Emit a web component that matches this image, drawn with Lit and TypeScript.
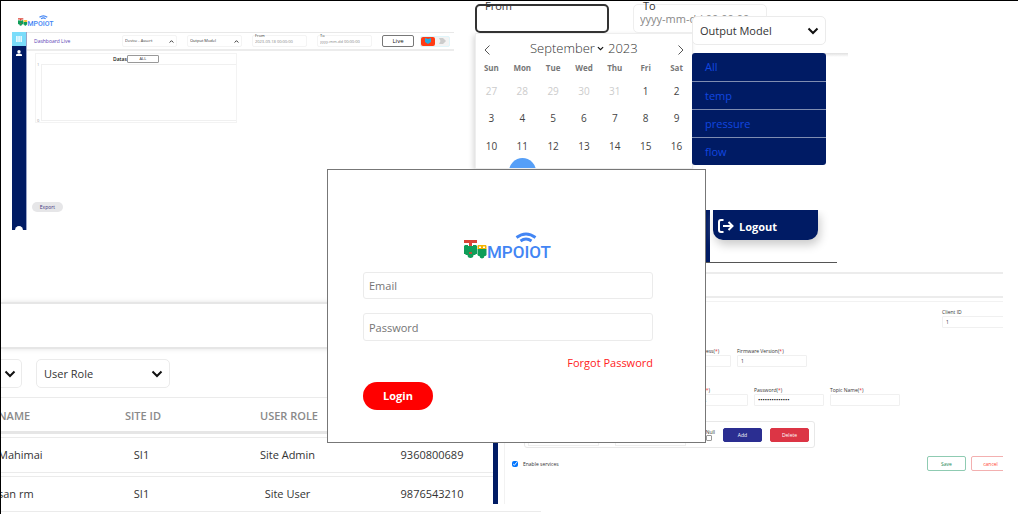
import { LitElement, html, css, svg, nothing } from "lit";
import { customElement } from "lit/decorators.js";

const base = css`
  :host {
    display: block;
    font-family: "Open Sans", "Noto Sans", sans-serif;
    color: #333;
  }
  * {
    box-sizing: border-box;
  }
  button,
  input,
  select {
    font: inherit;
    color: inherit;
    margin: 0;
    padding: 0;
    min-width: 0;
    background: #fff;
    border: 1px solid #ebebeb;
    appearance: none;
  }
  input[type="checkbox"] {
    appearance: auto;
  }
  .pick {
    display: grid;
    align-items: center;
  }
  .pick > * {
    grid-area: 1 / 1;
  }
  .pick svg {
    justify-self: end;
    pointer-events: none;
  }
`;

const chevron = (size: number, right: number, up = false) => html`
  <svg width=${size + right} height=${size} viewBox="0 0 ${(12 * (size + right)) / size} 12" preserveAspectRatio="xMinYMid" fill="none" stroke="#111" stroke-width="2">
    ${up ? svg`<path d="M1.5 8.5 6 4l4.500 4.500" />` : svg`<path d="M1.500 3.500 6 8l4.500-4.500" />`}
  </svg>
`;

@customElement("tempo-logo")
class TempoLogo extends LitElement {
  static styles = css`
    :host {
      display: block;
    }
    svg {
      display: block;
      width: 100%;
    }
    .word {
      font: 500 17px Roboto, sans-serif;
      fill: #4285f4;
    }
  `;
  render() {
    return html`
      <svg viewBox="0 0 88 28" role="img" aria-label="Tempoiot">
        <path d="M0 8h13v3H8v3H5v-3H0z" fill="#db4437" />
        <path d="M1 13h3v1h5v-1h3l1 1v8h-1l-1 1H9.500a3 3 0 0 1-6 0H2l-1-1H0v-8z" fill="#0f9d58" />
        <path d="M5 20h3v2H5z" fill="#b5533c" />
        <path d="M14 13h8l.5 1v3h-9v-3z" fill="#f4b400" />
        <path d="M15 14.500h2v1.500h-2zM19 14.500h2v1.500h-2z" fill="#fff" />
        <path d="M13.500 17h9v6l-1 1h-1a2.500 2.500 0 0 1-5 0h-1l-1-1z" fill="#0f9d58" />
        <g fill="none" stroke="#4285f4" stroke-width="2.800">
          <path d="M52.500 5.500q9.500-7 19 0" />
          <path d="M56.500 9q5.500-4 11 0" />
        </g>
        <text class="word" x="23" y="26">MPOIOT</text>
      </svg>
    `;
  }
}

@customElement("dashboard-window")
class DashboardWindow extends LitElement {
  static styles = [
    base,
    css`
      :host {
        font-size: 4px;
        line-height: 6px;
      }
      .head {
        height: 22px;
        padding: 5px 6px;
      }
      tempo-logo {
        width: 36px;
      }
      .body {
        display: flex;
        height: 198px;
      }
      nav {
        width: 15px;
        flex: none;
        display: flex;
        flex-direction: column;
        background: #001b64;
        border-right: 1px solid #9aa5c8;
        overflow: hidden;
      }
      nav a {
        height: 14px;
        display: grid;
        place-items: center;
      }
      nav .on {
        background: #7adcfa;
      }
      nav .more {
        margin: auto 0 -5px 3px;
        width: 8px;
        height: 9px;
        border-radius: 50%;
        background: #fff;
      }
      main {
        flex: 1;
        display: flex;
        flex-direction: column;
        align-items: flex-start;
      }
      .bar {
        align-self: stretch;
        height: 19px;
        display: flex;
        align-items: center;
        gap: 10px;
        padding-left: 7px;
        border-top: 1px solid #e8e8e8;
        border-bottom: 2px solid #ececec;
      }
      h1 {
        margin: 0;
        width: 78px;
        font-size: 5px;
        font-weight: 400;
        color: #5b3fb5;
      }
      .bar .pick {
        width: 55px;
      }
      .bar select,
      .bar .date {
        height: 12px;
        width: 100%;
        padding: 0 2px;
        border-color: #f4f4f4;
        border-radius: 2px;
      }
      .stamp {
        width: 55px;
        display: grid;
      }
      .stamp label {
        grid-area: 1 / 1;
        z-index: 1;
        align-self: start;
        justify-self: start;
        margin: -2px 0 0 3px;
        line-height: 5px;
      }
      .stamp .date {
        grid-area: 1 / 1;
        color: #888;
      }
      .live {
        width: 32px;
        height: 12px;
        border-color: #777;
        border-radius: 2px;
        font-size: 6px;
        color: #111;
      }
      .switch {
        margin-left: -4px;
        width: 30px;
        height: 11px;
        display: grid;
        grid-template-columns: 1fr 1fr;
        place-items: center;
        border: 1px solid #dff5fa;
        border-radius: 2px;
        background: #f3f3f3;
      }
      .knob {
        display: grid;
        place-items: center;
        width: 100%;
        height: 100%;
        background: #ff3b14;
        border-radius: 2px;
      }
      .chart {
        margin: 2px 0 0 8px;
        width: 202px;
        height: 70px;
        border: 1px solid #f3f3f3;
        display: flex;
        flex-direction: column;
      }
      .chart header {
        display: flex;
        justify-content: center;
        align-items: center;
        height: 10px;
        font-size: 5px;
        font-weight: 600;
        color: #222;
      }
      .chart select {
        width: 32px;
        height: 8px;
        border-color: #999;
        border-radius: 1px;
        font-size: 4px;
        font-weight: 400;
        text-align: center;
        text-align-last: center;
      }
      .plot {
        flex: 1;
        display: grid;
        grid-template-columns: 5px 1fr;
        color: #999;
      }
      .plot .y {
        display: flex;
        flex-direction: column;
        justify-content: space-between;
        line-height: 2px;
        padding-left: 1px;
      }
      .plot .area {
        border: 1px solid #f0f0f0;
        border-right: 0;
        margin-bottom: 1px;
      }
      .export {
        margin: auto 0 18px 5px;
        width: 31px;
        height: 10px;
        border: 0;
        border-radius: 5px;
        background: #e6e6e8;
        color: #3d3580;
        font-size: 5px;
      }
    `,
  ];
  render() {
    return html`
      <div class="head"><tempo-logo></tempo-logo></div>
      <div class="body">
        <nav>
          <a class="on" href="#dashboard" aria-label="Dashboard">
            <svg width="6" height="6" viewBox="0 0 6 6" fill="#fff" opacity=".8"><path d="M0 0h1.700v6H0zM2.200 0h1.700v6H2.200zM4.400 0h1.600v6H4.400z" /></svg>
          </a>
          <a href="#users" aria-label="Users">
            <svg width="6" height="6" viewBox="0 0 6 6" fill="#fff"><circle cx="3" cy="1.700" r="1.700" /><path d="M0 6V4.500Q3 2.500 6 4.500V6z" /></svg>
          </a>
          <span class="more"></span>
        </nav>
        <main>
          <div class="bar">
            <h1>Dashboard Live</h1>
            <div class="pick">
              <select aria-label="Device"><option>Device - Assert</option></select>
              ${chevron(5, 3, true)}
            </div>
            <div class="pick">
              <select aria-label="Output"><option>Output Model</option></select>
              ${chevron(5, 3, true)}
            </div>
            <div class="stamp">
              <label for="from">From</label>
              <input class="date" id="from" value="2023-09-18 00:00:00" />
            </div>
            <div class="stamp">
              <label for="to">To</label>
              <input class="date" id="to" value="yyyy-mm-dd 00:00:00" />
            </div>
            <button class="live">Live</button>
            <div class="switch">
              <span class="knob"><svg width="6" height="6" viewBox="0 0 6 6" fill="#25a9e0"><path d="M0 0l3 1 3-1v4L3 6 0 4z" /></svg></span>
              <svg width="7" height="6" viewBox="0 0 7 6" fill="#ccc"><path d="M0 0h4l3 3-3 3H0l1.500-3z" /></svg>
            </div>
          </div>
          <section class="chart">
            <header>
              <label for="datas">Datas</label>
              <select id="datas"><option>ALL</option></select>
            </header>
            <div class="plot">
              <div class="y"><span>1</span><span>0</span></div>
              <div class="area"></div>
            </div>
          </section>
          <button class="export">Export</button>
        </main>
      </div>
    `;
  }
}

@customElement("calendar-window")
class CalendarWindow extends LitElement {
  static styles = [
    base,
    css`
      :host {
        font-size: 11px;
        line-height: 16px;
      }
      .range {
        display: flex;
        gap: 24px;
      }
      .field {
        display: grid;
        width: 134px;
      }
      .field > * {
        grid-area: 1 / 1;
      }
      .field label {
        z-index: 1;
        justify-self: start;
        align-self: start;
        margin: -6px 0 0 10px;
        line-height: 15px;
      }
      .field input {
        height: 29px;
        padding: 0 6px;
        border-color: #eee;
        border-radius: 5px;
      }
      .field .active {
        border: 2px solid #333;
      }
      input::placeholder {
        color: #888;
      }
      .cal {
        width: 218px;
        height: 136px;
        overflow: hidden;
        border: 1px solid #eee;
        background: #fff;
        box-shadow: -2px 2px 5px #ddd;
      }
      .month {
        display: flex;
        align-items: center;
        justify-content: space-between;
        height: 28px;
        padding: 0 7px;
      }
      .month button {
        border: 0;
        display: grid;
        padding-top: 3px;
      }
      .title {
        display: flex;
        align-items: center;
        gap: 4px;
        font-size: 13px;
        font-weight: 300;
      }
      .title select {
        border: 0;
        padding-right: 9px;
      }
      .title .year {
        width: 30px;
        border: 0;
      }
      table {
        width: 100%;
        table-layout: fixed;
        border-collapse: collapse;
        text-align: center;
        font-size: 10px;
      }
      th {
        height: 11px;
        padding: 0;
        font-size: 8px;
        line-height: 11px;
        font-weight: 700;
        color: #777;
      }
      td {
        height: 28px;
        padding: 0;
        color: #444;
      }
      tbody tr:first-child td {
        height: 31px;
        padding-top: 4px;
      }
      tbody tr:last-child td {
        vertical-align: top;
      }
      tbody .out {
        color: #ccc;
      }
      .today {
        display: block;
        width: 27px;
        height: 27px;
        margin: -2px auto 0;
        border-radius: 50%;
        background: #569ff7;
      }
    `,
  ];
  render() {
    const days = ["Sun", "Mon", "Tue", "Wed", "Thu", "Fri", "Sat"];
    const weeks = [
      [27, 28, 29, 30, 31, 1, 2],
      [3, 4, 5, 6, 7, 8, 9],
      [10, 11, 12, 13, 14, 15, 16],
    ];
    return html`
      <div class="range">
        <div class="field">
          <label for="from">From</label>
          <input id="from" class="active" />
        </div>
        <div class="field">
          <label for="to">To</label>
          <input id="to" placeholder="yyyy-mm-dd 00:00:00" />
        </div>
      </div>
      <div class="cal">
        <div class="month">
          <button aria-label="Previous month">
            <svg width="8" height="12" viewBox="0 0 8 12" fill="none" stroke="#555"><path d="M6.500 1.500 2 6l4.500 4.500" /></svg>
          </button>
          <div class="title">
            <div class="pick">
              <select aria-label="Month"><option>September</option></select>
              ${chevron(7, 0)}
            </div>
            <input class="year" aria-label="Year" value="2023" />
          </div>
          <button aria-label="Next month">
            <svg width="8" height="12" viewBox="0 0 8 12" fill="none" stroke="#555"><path d="M1.500 1.500 6 6l-4.500 4.500" /></svg>
          </button>
        </div>
        <table>
          <thead>
            <tr>${days.map((d) => html`<th>${d}</th>`)}</tr>
          </thead>
          <tbody>
            ${weeks.map((w, i) => html`<tr>${w.map((d) => html`<td class=${i === 0 && d > 20 ? "out" : ""}>${d}</td>`)}</tr>`)}
            <tr><td></td><td><span class="today"></span></td></tr>
          </tbody>
        </table>
      </div>
    `;
  }
}

@customElement("output-menu")
class OutputMenu extends LitElement {
  static styles = [
    base,
    css`
      :host {
        font-size: 11px;
      }
      .pick select {
        width: 100%;
        height: 29px;
        padding: 0 7px;
        border-radius: 5px;
      }
      ul {
        list-style: none;
        margin: 8px 0 0;
        padding: 0;
        border-radius: 3px;
        background: #001b64;
      }
      li {
        height: 28px;
      }
      li + li {
        border-top: 1px solid #7f8db1;
      }
      a {
        display: block;
        padding-left: 13px;
        line-height: 28px;
        color: #1247e0;
        text-decoration: none;
      }
    `,
  ];
  render() {
    return html`
      <div class="pick">
        <select aria-label="Output"><option>Output Model</option></select>
        ${chevron(12, 7)}
      </div>
      <ul>
        ${["All", "temp", "pressure", "flow"].map((t) => html`<li><a href="#${t}">${t}</a></li>`)}
      </ul>
    `;
  }
}

@customElement("logout-window")
class LogoutWindow extends LitElement {
  static styles = [
    base,
    css`
      .wrap {
        display: flex;
        gap: 3px;
        height: 53px;
        overflow: hidden;
        border-bottom: 1px solid #555;
      }
      .side {
        width: 5px;
        background: #001b64;
      }
      button {
        display: flex;
        align-items: center;
        gap: 5px;
        width: 105px;
        height: 30px;
        padding: 2px 0 0 5px;
        border: 0;
        border-radius: 0 0 10px 10px;
        background: #001b64;
        box-shadow: 2px 5px 10px #ccc;
        color: #fff;
        font-size: 11px;
        font-weight: 700;
      }
    `,
  ];
  render() {
    return html`
      <div class="wrap">
        <div class="side"></div>
        <button>
          <svg width="16" height="14" viewBox="0 0 16 14" fill="none" stroke="#fff" stroke-width="2">
            <path d="M5.500 1H3Q1 1 1 3v8q0 2 2 2h2.500M5 7h9.500M10.500 3l4 4-4 4" />
          </svg>
          Logout
        </button>
      </div>
    `;
  }
}

@customElement("users-window")
class UsersWindow extends LitElement {
  static styles = [
    base,
    css`
      :host {
        font-size: 11px;
        overflow: hidden;
      }
      .strip {
        height: 47px;
        border-top: 2px solid #e6e6e6;
        border-bottom: 2px solid #e6e6e6;
        box-shadow: 0 0 5px #e4e4e4;
      }
      .filters {
        display: flex;
        gap: 14px;
        padding: 10px 0;
      }
      .filters .pick {
        width: 134px;
      }
      .filters .first {
        width: 21px;
      }
      select {
        width: 100%;
        height: 29px;
        padding: 0 7px;
        border-radius: 5px;
      }
      .first select {
        border-left: 0;
        border-radius: 0 5px 5px 0;
      }
      table {
        width: 100%;
        table-layout: fixed;
        border-collapse: separate;
        border-spacing: 0 3px;
        margin-top: -4px;
        text-align: center;
      }
      th,
      td {
        height: 36px;
        padding: 0 3px 2px 0;
        border-top: 1px solid #ebebeb;
        border-bottom: 1px solid #ebebeb;
        white-space: nowrap;
      }
      th {
        height: 37px;
        padding: 2px 0 0;
        font-weight: 600;
        color: #8a8a8a;
        border-bottom: 3px solid #e6e6e6;
      }
      th:first-child,
      td:first-child {
        text-align: left;
        text-indent: -3px;
      }
      .name {
        width: 69px;
      }
      .col {
        width: 146px;
      }
      .phone {
        width: 143px;
      }
    `,
  ];
  render() {
    const rows = [
      ["Mahimai", "SI1", "Site Admin", "9360800689"],
      ["san rm", "SI1", "Site User", "9876543210"],
    ];
    return html`
      <div class="strip"></div>
      <div class="filters">
        <div class="pick first">
          <select aria-label="Site"><option></option></select>
          ${chevron(12, 6)}
        </div>
        <div class="pick">
          <select aria-label="User role"><option>User Role</option></select>
          ${chevron(12, 7)}
        </div>
      </div>
      <table>
        <colgroup>
          <col class="name" />
          <col class="col" />
          <col class="col" />
          <col class="phone" />
          <col />
        </colgroup>
        <thead>
          <tr><th>NAME</th><th>SITE ID</th><th>USER ROLE</th><th></th><th></th></tr>
        </thead>
        <tbody>
          ${rows.map((r) => html`<tr>${r.map((c) => html`<td>${c}</td>`)}<td></td></tr>`)}
        </tbody>
      </table>
    `;
  }
}

@customElement("config-window")
class ConfigWindow extends LitElement {
  static styles = [
    base,
    css`
      :host {
        font-size: 5px;
        line-height: 6px;
        background: #fff;
        overflow: hidden;
      }
      .shell {
        display: grid;
        grid-template-columns: 5px 1fr;
      }
      .side {
        background: #001b64;
      }
      .strip {
        height: 26px;
        margin-top: 9px;
        border-top: 2px solid #ececec;
        border-bottom: 2px solid #ececec;
      }
      form {
        height: 204px;
        margin: 3px 0 0 6px;
        border: 1px solid #f2f2f2;
        border-right: 0;
        border-bottom: 0;
        display: flex;
        flex-direction: column;
      }
      .row {
        display: flex;
        gap: 6px;
        height: 39px;
      }
      .field {
        width: 70px;
        display: flex;
        flex-direction: column;
        gap: 1px;
      }
      .field label {
        white-space: nowrap;
      }
      .field input {
        height: 12px;
        padding: 0 3px;
        border-color: #f0f0f0;
        border-radius: 1px;
      }
      .field input[type="password"] {
        color: #000;
        font-size: 6px;
      }
      .client {
        justify-content: flex-end;
        height: 46px;
        padding-top: 7px;
        margin-right: -9px;
      }
      .second {
        padding-left: 156px;
      }
      .third {
        padding-left: 173px;
      }
      i {
        font-style: normal;
        color: #e33;
      }
      .rule {
        display: flex;
        align-items: center;
        gap: 8px;
        width: 291px;
        height: 27px;
        margin: -5px 0 0 19px;
        padding: 0 5px 0 3px;
        border: 1px solid #e8e8e8;
        border-radius: 3px;
      }
      .rule .text {
        width: 71px;
        height: 12px;
        margin: 11px 8px 0 0;
        border-color: #eee;
      }
      .check {
        display: flex;
        flex-direction: column;
        margin-left: auto;
      }
      .check input {
        appearance: none;
        width: 6px;
        height: 6px;
        border: 1px solid #999;
        border-radius: 1px;
      }
      .enable input {
        width: 6px;
        height: 6px;
      }
      button {
        width: 39px;
        height: 14px;
        border-radius: 2px;
      }
      .add {
        background: #2b2e91;
        border-color: #2b2e91;
        color: #fff;
      }
      .del {
        background: #dc3545;
        border-color: #dc3545;
        color: #fff;
      }
      .foot {
        display: flex;
        align-items: center;
        gap: 5px;
        margin: 8px -7px 0 7px;
      }
      .enable {
        display: flex;
        align-items: center;
        gap: 5px;
        margin-right: auto;
      }
      .save {
        height: 15px;
        border-color: #8fcbb2;
        color: #198754;
      }
      .cancel {
        height: 15px;
        border-color: #f3b0b0;
        color: #f43;
      }
    `,
  ];
  field(id: string, label: string, value = "", required = true, type = "text") {
    return html`
      <div class="field">
        <label for=${id}>${label}${required ? html`(<i>*</i>)` : nothing}</label>
        <input id=${id} type=${type} .value=${value} />
      </div>
    `;
  }
  render() {
    return html`
      <div class="shell">
        <div class="side"></div>
        <div>
          <div class="strip"></div>
          <form>
            <div class="row client">${this.field("client", "Client ID", "1", false)}</div>
            <div class="row second">
              ${this.field("address", "Gateway MAC Address")} ${this.field("firmware", "Firmware Version", "1")}
            </div>
            <div class="row third">
              ${this.field("user", "User Name", "iotsensors")} ${this.field("password", "Password", "secretpassword", true, "password")}
              ${this.field("topic", "Topic Name")}
            </div>
            <div class="rule">
              <input class="text" aria-label="Address" value="http://config.tempoiot" />
              <input class="text" aria-label="Value" />
              <div class="check">
                <label for="null">Null</label>
                <input id="null" type="checkbox" />
              </div>
              <button class="add" type="button">Add</button>
              <button class="del" type="button">Delete</button>
            </div>
            <div class="foot">
              <label class="enable"><input type="checkbox" checked />Enable services</label>
              <button class="save" type="button">Save</button>
              <button class="cancel" type="button">cancel</button>
            </div>
          </form>
        </div>
      </div>
    `;
  }
}

@customElement("login-window")
class LoginWindow extends LitElement {
  static styles = [
    base,
    css`
      form {
        display: flex;
        flex-direction: column;
        height: 274px;
        padding: 62px 52px 32px 35px;
        background: #fff;
        border: 1px solid #777;
        font-size: 11px;
      }
      tempo-logo {
        width: 88px;
        margin: 0 0 12px 101px;
      }
      .text {
        height: 28px;
        padding: 0 5px;
        border-radius: 3px;
        margin-bottom: 14px;
      }
      .text::placeholder {
        color: #757575;
      }
      a {
        align-self: flex-end;
        line-height: 16px;
        color: #f22;
        text-decoration: none;
      }
      button {
        width: 70px;
        height: 29px;
        margin-top: 11px;
        border: 0;
        border-radius: 15px;
        background: #f00;
        color: #fff;
        font-weight: 700;
      }
    `,
  ];
  render() {
    return html`
      <form>
        <tempo-logo></tempo-logo>
        <input class="text" type="email" placeholder="Email" aria-label="Email" />
        <input class="text" type="password" placeholder="Password" aria-label="Password" />
        <a href="#forgot">Forgot Password</a>
        <button type="button">Login</button>
      </form>
    `;
  }
}

@customElement("app-root")
class AppRoot extends LitElement {
  static styles = css`
    :host {
      display: block;
    }
    .desk {
      position: relative;
      min-height: 100vh;
      box-sizing: border-box;
      overflow: hidden;
      background: #fff;
      border-top: 1px solid #000;
      border-left: 1px solid #000;
    }
    .desk > * {
      position: absolute;
    }
    dashboard-window {
      left: 11px;
      top: 9px;
      width: 442px;
    }
    .shade {
      left: 824px;
      top: 52px;
      width: 23px;
      height: 4px;
      background: linear-gradient(#e0e0e0, #fff);
    }
    calendar-window {
      left: 474px;
      top: 3px;
    }
    output-menu {
      left: 691px;
      top: 15px;
      width: 134px;
    }
    logout-window {
      left: 704px;
      top: 209px;
      width: 132px;
    }
    users-window {
      left: 0;
      top: 296px;
      width: 540px;
      padding-top: 5px;
    }
    config-window {
      left: 492px;
      top: 262px;
      width: 510px;
      height: 241px;
    }
    login-window {
      left: 326px;
      top: 168px;
      width: 379px;
    }
  `;
  render() {
    return html`
      <div class="desk">
        <dashboard-window></dashboard-window>
        <div class="shade"></div>
        <calendar-window></calendar-window>
        <output-menu></output-menu>
        <users-window></users-window>
        <config-window></config-window>
        <logout-window></logout-window>
        <login-window></login-window>
      </div>
    `;
  }
}
